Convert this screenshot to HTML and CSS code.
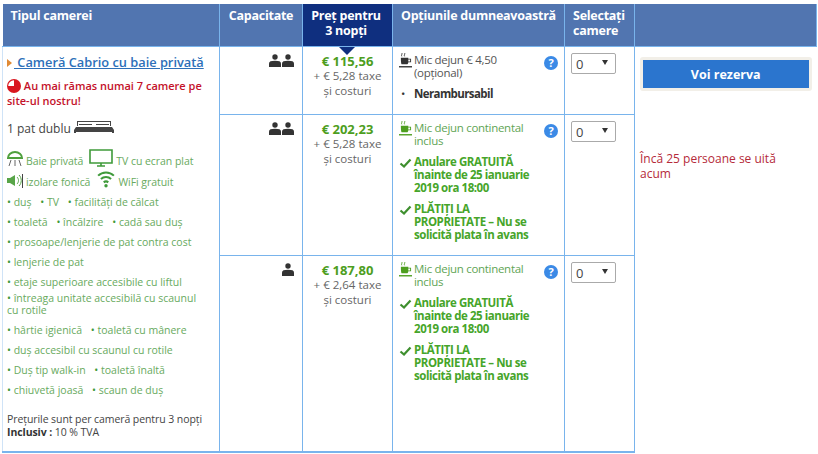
FILE: index.html
```html
<!doctype html>
<html lang="ro">
<head>
	<meta charset="UTF-8">
	<title>Tipul camerei</title>
	<link rel="stylesheet" href="styles.css">
</head>
<body>
	<svg class="defs" width="0" height="0">
		<symbol id="person" viewBox="0 0 12 13"><circle cx="6" cy="3" r="2.700"/><path d="M0 13V9.500C0 7.500 2 6.800 6 6.800s6 .7 6 2.700V13z"/></symbol>
		<symbol id="cup" viewBox="0 0 14 16"><path d="M3 0c1 1-1 2 0 3.500M6 0c1 1-1 2 0 3.500" fill="none" stroke="currentColor"/><path d="M2 5h8v1h3v4h-3c0 1-.5 2-1 2H3c-.5 0-1-2-1-7zM10 7v2h2V7z"/><path d="M0 14h14v1.500H0z"/></symbol>
		<symbol id="check" viewBox="0 0 12 10"><path d="M1 5.500l3.500 3L11 1.500" fill="none" stroke="currentColor" stroke-width="2.200"/></symbol>
		<symbol id="help" viewBox="0 0 14 14"><circle cx="7" cy="7" r="7" fill="#3b8ae6"/><text x="7" y="11" text-anchor="middle" class="help-mark">?</text></symbol>
	</svg>

	<table class="rooms">
		<colgroup>
			<col class="col-type"><col class="col-cap"><col class="col-price"><col class="col-opt"><col class="col-sel"><col class="col-side">
		</colgroup>
		<thead>
			<tr>
				<th class="left">Tipul camerei</th>
				<th>Capacitate</th>
				<th class="current">Preţ pentru<br>3 nopţi</th>
				<th class="left">Opțiunile dumneavoastră</th>
				<th class="left">Selectați<br>camere</th>
				<th></th>
			</tr>
		</thead>
		<tbody>
			<tr class="row-one">
				<td rowspan="3" class="type">
					<div class="room-name"><span class="arrow"></span><a href="#">&nbsp;Cameră Cabrio cu baie privată</a></div>
					<p class="scarcity">
						<svg class="clock" viewBox="0 0 14 14"><circle cx="7" cy="7" r="7" fill="#d9161f"/><path d="M7 1.200V7H1.200A5.800 5.800 0 0 1 7 1.200z" fill="#fff"/></svg>
						Au mai rămas numai 7 camere pe site-ul nostru!
					</p>
					<p class="bed">1 pat dublu
						<svg class="bed-icon" viewBox="0 0 40 14"><path d="M3 1h34v5h-1V2H4v4H3z" fill="#444"/><path d="M5 4.500h13M22 4.500h13" stroke="#444"/><path d="M2 7h36l2 3v3h-2v-1H2v1H0v-3z" fill="#444"/></svg>
					</p>
					<div class="facility big">
						<svg class="ic-shower" viewBox="0 0 16 16"><path d="M1 7a7 6 0 0 1 14 0z" fill="none" stroke="#4fa03d" stroke-width="2"/><path d="M4 9l-2 6M8 9v6M12 9l2 6" stroke="#666" fill="none"/></svg>
						<span>Baie privată</span>
						<svg class="ic-tv" viewBox="0 0 24 18"><path d="M1 1h22v13H1zM8 17h8M12 14v3" fill="none" stroke="#3f9a3a" stroke-width="1.600"/></svg>
						<span>TV cu ecran plat</span>
					</div>
					<div class="facility big second">
						<svg class="ic-sound" viewBox="0 0 16 14"><path d="M0 4h3l5-3v11L3 9H0z" fill="#58a548"/><path d="M10 3c2 2 2 5 0 7M12 1c3 3 3 8 0 11" fill="none" stroke="#58a548"/><path d="M15.500 0v14" stroke="#444"/></svg>
						<span>izolare fonică</span>
						<svg class="ic-wifi" viewBox="0 0 16 16"><path d="M1 5a10 10 0 0 1 14 0M3.500 8a6.500 6.500 0 0 1 9 0M6 11a3 3 0 0 1 4 0" fill="none" stroke="#3f9a3a" stroke-width="1.800"/><circle cx="8" cy="14" r="1.500" fill="#3f9a3a"/></svg>
						<span>WiFi gratuit</span>
					</div>
					<p class="facility"><i>•</i> duş <i class="gap">•</i> TV <i class="gap">•</i> facilităţi de călcat</p>
					<p class="facility"><i>•</i> toaletă <i class="gap">•</i> încălzire <i class="gap">•</i> cadă sau duş</p>
					<p class="facility"><i>•</i> prosoape/lenjerie de pat contra cost</p>
					<p class="facility"><i>•</i> lenjerie de pat</p>
					<p class="facility"><i>•</i> etaje superioare accesibile cu liftul</p>
					<p class="facility tight"><i>•</i> întreaga unitate accesibilă cu scaunul<br>cu rotile</p>
					<p class="facility"><i>•</i> hârtie igienică <i class="gap">•</i> toaletă cu mânere</p>
					<p class="facility"><i>•</i> duș accesibil cu scaunul cu rotile</p>
					<p class="facility"><i>•</i> Duş tip walk-in <i class="gap">•</i> toaletă înaltă</p>
					<p class="facility"><i>•</i> chiuvetă joasă <i class="gap">•</i> scaun de duș</p>
					<p class="note">Preţurile sunt per cameră pentru 3 nopţi<br><b>Inclusiv :</b> 10 % TVA</p>
				</td>
				<td class="cap"><svg class="person"><use href="#person"/></svg><svg class="person"><use href="#person"/></svg></td>
				<td class="price first"><span class="tail"></span><b>€ 115,56</b><br>+ € 5,28 taxe<br>și costuri</td>
				<td class="opt">
					<div class="meal"><svg class="cup"><use href="#cup"/></svg><span>Mic dejun € 4,50<br>(opțional)</span><svg class="help"><use href="#help"/></svg></div>
					<div class="plain"><span class="dot">•</span><b>Nerambursabil</b></div>
				</td>
				<td class="sel"><div class="select">0<span class="caret"></span></div></td>
				<td rowspan="3" class="side">
					<div class="btn-wrap"><a class="btn" href="#">Voi rezerva</a></div>
					<p class="watching">Încă 25 persoane se uită acum</p>
				</td>
			</tr>
			<tr class="row-two">
				<td class="cap"><svg class="person"><use href="#person"/></svg><svg class="person"><use href="#person"/></svg></td>
				<td class="price"><b>€ 202,23</b><br>+ € 5,28 taxe<br>și costuri</td>
				<td class="opt">
					<div class="meal green"><svg class="cup"><use href="#cup"/></svg><span>Mic dejun continental<br>inclus</span><svg class="help"><use href="#help"/></svg></div>
					<div class="perk"><svg class="check"><use href="#check"/></svg><b>Anulare GRATUITĂ<br>înainte de 25 ianuarie<br>2019 ora 18:00</b></div>
					<div class="perk"><svg class="check"><use href="#check"/></svg><b>PLĂTIȚI LA<br>PROPRIETATE – Nu se<br>solicită plata în avans</b></div>
				</td>
				<td class="sel"><div class="select">0<span class="caret"></span></div></td>
			</tr>
			<tr class="row-three">
				<td class="cap"><svg class="person"><use href="#person"/></svg></td>
				<td class="price"><b>€ 187,80</b><br>+ € 2,64 taxe<br>și costuri</td>
				<td class="opt">
					<div class="meal green"><svg class="cup"><use href="#cup"/></svg><span>Mic dejun continental<br>inclus</span><svg class="help"><use href="#help"/></svg></div>
					<div class="perk"><svg class="check"><use href="#check"/></svg><b>Anulare GRATUITĂ<br>înainte de 25 ianuarie<br>2019 ora 18:00</b></div>
					<div class="perk"><svg class="check"><use href="#check"/></svg><b>PLĂTIȚI LA<br>PROPRIETATE – Nu se<br>solicită plata în avans</b></div>
				</td>
				<td class="sel"><div class="select">0<span class="caret"></span></div></td>
			</tr>
		</tbody>
	</table>
</body>
</html>
```

FILE: styles.css
```css
*{
	margin:0;
	padding:0;
	box-sizing:border-box;
}
body{
	padding:4px 0 0 2px;
	background:#fff;
	font-family:"Open Sans","Noto Sans",sans-serif;
	font-size:11.5px;
	line-height:13px;
	color:#444;
}
.defs{
	position:absolute;
}
.help-mark{
	font:bold 11px "Open Sans",sans-serif;
	fill:#fff;
}
.rooms{
	width:814px;
	table-layout:fixed;
	border-collapse:collapse;
}
.col-type{width:217px;}
.col-cap{width:83px;}
.col-price{width:90px;}
.col-opt{width:172px;}
.col-sel{width:70px;}
.col-side{width:182px;}
th{
	height:42px;
	padding:4px 3px 0;
	vertical-align:top;
	text-align:center;
	background:#5175b0;
	color:#fff;
	font-size:12.500px;
	line-height:15px;
	letter-spacing:-.25px;
	border-right:1px solid #79b4ec;
	border-bottom:1px solid #79b4ec;
}
th.left{
	text-align:left;
	padding-left:8px;
	padding-right:0;
	white-space:nowrap;
}
th.current{
	background:#0f2f7f;
	text-align:center;
	padding-left:0;
}
td{
	vertical-align:top;
	border-right:1px solid #79b4ec;
	border-bottom:1px solid #79b4ec;
}
.rooms tr td.side{
	border-right:0;
	border-bottom:0;
	padding:10px 5px 0 5px;
}
td.type{
	border-left:1px solid #cfe3f7;
	border-bottom:2px solid #79b4ec;
	padding:7px 6px 0 4px;
}
.row-one td{height:68px;}
.row-two td{height:141px;}
.row-three td{height:197px;border-bottom:2px solid #79b4ec;}
.room-name{
	font-size:12.800px;
	font-weight:600;
	line-height:16px;
}
.room-name a{
	color:#2d70b9;
}
.arrow{
	display:inline-block;
	border-left:5px solid #e08a35;
	border-top:4.500px solid transparent;
	border-bottom:4.500px solid transparent;
	margin-right:2px;
}
.scarcity{
	margin-top:8px;
	color:#c4122a;
	font-weight:600;
	font-size:11px;
	line-height:15px;
}
.clock{
	width:14px;
	height:14px;
	vertical-align:-3px;
}
.bed{
	margin-top:12px;
	font-size:12px;
	line-height:16px;
}
.bed-icon{
	width:40px;
	height:14px;
	vertical-align:-1px;
}
.facility{
	color:#68aa5e;
	font-size:10.500px;
	line-height:12px;
	margin-top:8px;
}
.facility i{
	font-style:normal;
	color:#3f9a3a;
}
.facility .gap{
	margin-left:6px;
}
.facility.tight{
	margin-top:4px;
}
.facility.big{
	display:flex;
	align-items:flex-end;
	gap:3px;
	margin-top:12px;
	letter-spacing:-.05px;
}
.facility.big.second{
	margin-top:3px;
}
.ic-shower{width:16px;height:16px;}
.ic-tv{width:24px;height:18px;margin-left:3px;}
.ic-sound{width:16px;height:14px;}
.ic-wifi{width:18px;height:18px;margin-left:4px;}
.note{
	margin-top:17px;
	font-size:10.500px;
	line-height:13px;
	letter-spacing:-.08px;
}
.note b{
	color:#333;
}
.cap{
	text-align:right;
	padding:7px 8px 0 0;
}
.person{
	width:12px;
	height:13px;
	margin-left:1px;
	fill:#333;
}
.price{
	position:relative;
	text-align:center;
	padding-top:7px;
	font-size:11.500px;
	line-height:14.500px;
	color:#666;
}
.price b{
	color:#4d9e1e;
	font-size:13px;
}
.tail{
	position:absolute;
	left:36px;
	top:0;
	border-top:8px solid #0f2f7f;
	border-left:8px solid transparent;
	border-right:8px solid transparent;
}
.opt{
	padding:6px 5px 0 6px;
	letter-spacing:-.3px;
}
.meal{
	position:relative;
	display:flex;
	gap:2px;
	color:#555;
}
.meal.green{
	color:#5fa555;
}
.cup{
	width:13px;
	height:15px;
	flex:none;
	fill:currentColor;
	color:#333;
}
.meal.green .cup{
	color:#4d9e1e;
}
.help{
	position:absolute;
	right:1px;
	top:3px;
	width:14px;
	height:14px;
}
.plain{
	display:flex;
	margin-top:8px;
	color:#333;
}
.plain .dot{
	width:15px;
	padding-left:2px;
}
.plain b{
	letter-spacing:-.6px;
}
.perk{
	display:flex;
	gap:2px;
	margin-top:8px;
	color:#46a52a;
}
.perk b{
	letter-spacing:-.45px;
}
.check{
	width:13px;
	height:10px;
	margin-top:3px;
	flex:none;
	color:#3e8f2e;
}
.sel{
	padding:6px 0 0 6px;
}
.select{
	position:relative;
	width:45px;
	height:21px;
	border:1px solid #aaa;
	border-radius:2px;
	padding:4px 0 0 4px;
	font-size:13px;
}
.caret{
	position:absolute;
	right:7px;
	top:6px;
	border-top:5px solid #333;
	border-left:3px solid transparent;
	border-right:3px solid transparent;
}
.btn-wrap{
	border:3px solid #f2efe8;
	border-radius:3px;
	height:34px;
}
.btn{
	display:block;
	height:28px;
	background:#2b75ce;
	color:#fff;
	font-weight:700;
	font-size:12.500px;
	line-height:30px;
	text-align:center;
	text-decoration:none;
}
.watching{
	margin-top:60px;
	color:#b52a3a;
	font-size:12px;
	line-height:15px;
	width:150px;
}
```
